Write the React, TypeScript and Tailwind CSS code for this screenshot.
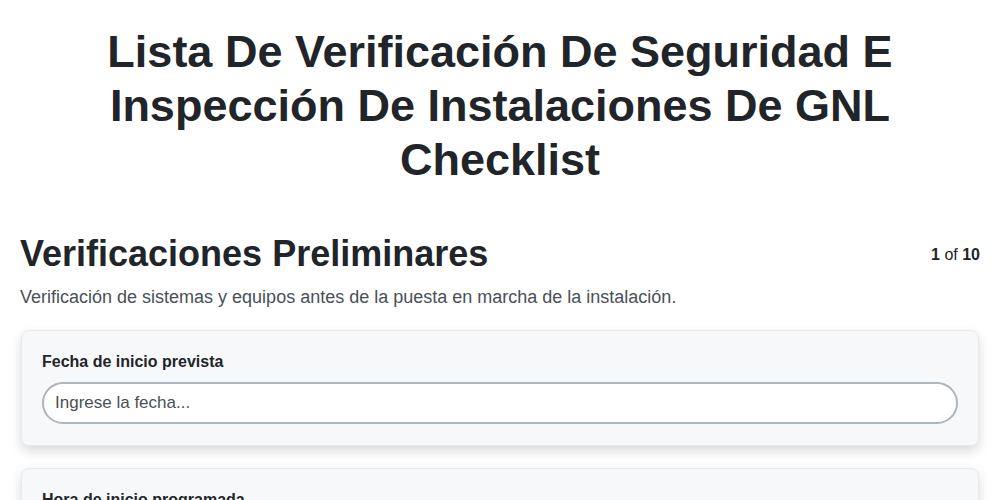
export default function App() {
  const campos = [
    { id: "fecha_inicio", label: "Fecha de inicio prevista", placeholder: "Ingrese la fecha..." },
    { id: "hora_inicio", label: "Hora de inicio programada", placeholder: "Ingrese la hora..." },
  ];

  return (
    <div className="min-h-screen bg-white px-5 font-['Liberation_Sans',Arial,sans-serif] text-[#212529]">
      <h1 className="mx-auto pt-[25px] text-center text-[45px] font-bold leading-[54px]">
        Lista De Verificación De Seguridad E Inspección De Instalaciones De GNL Checklist
      </h1>

      <div className="mt-[45px] flex items-start justify-between">
        <h2 className="text-[36px] font-bold leading-[43px]">Verificaciones Preliminares</h2>
        <div className="pt-[11px] text-[16px]">
          <span className="font-bold">1</span> of <span className="font-bold">10</span>
        </div>
      </div>
      <p className="mt-[9px] text-[18px] leading-[26px] text-[#495057]">
        Verificación de sistemas y equipos antes de la puesta en marcha de la instalación.
      </p>

      <div className="mt-[20px] flex flex-col gap-[22px] pb-6">
        {campos.map((campo) => (
          <div
            key={campo.id}
            className="mx-px rounded-lg border border-[#e9ecef] bg-[#f7f8fa] px-5 pt-[21px] pb-[21px] shadow-[0_5px_12px_rgba(0,0,0,0.15)]"
          >
            <label htmlFor={campo.id} className="block text-[16px] font-bold leading-5">
              {campo.label}
            </label>
            <input
              id={campo.id}
              type="text"
              placeholder={campo.placeholder}
              className="mt-[10px] h-[42px] w-full rounded-full border-2 border-[#adb5bd] bg-white px-[11px] text-[17px] text-[#212529] outline-none placeholder:text-[#495057]"
            />
          </div>
        ))}
      </div>
    </div>
  );
}
